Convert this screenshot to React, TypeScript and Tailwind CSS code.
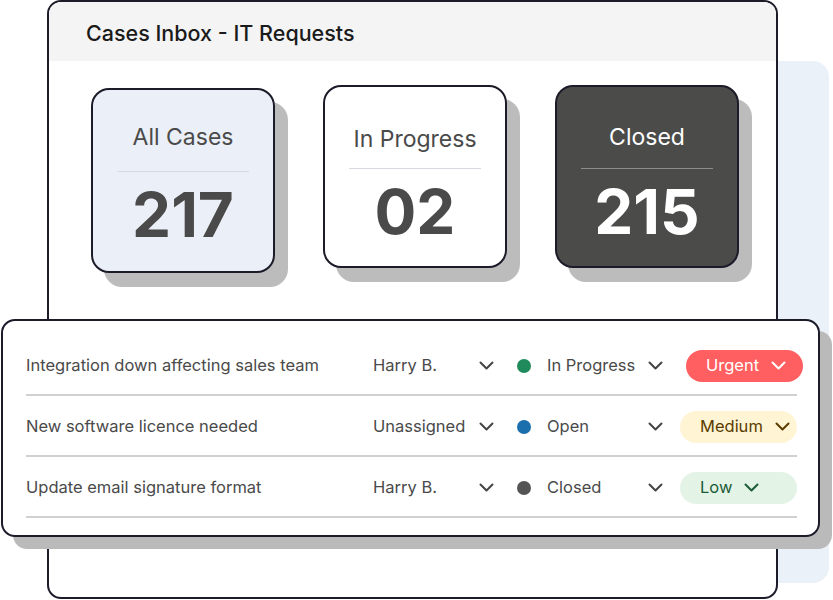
import React from "react";

const Chevron = ({ color = "#444", w = 15 }: { color?: string; w?: number }) => (
  <svg width={w} height={9} viewBox="0 0 15 9" fill="none" className="shrink-0">
    <path d="M1.5 1.5 L7.5 7.5 L13.5 1.5" stroke={color} strokeWidth={2} strokeLinecap="round" strokeLinejoin="round" />
  </svg>
);

type Row = {
  title: string;
  who: string;
  dot: string;
  status: string;
  prio: string;
  pillBg: string;
  pillText: string;
  shift?: boolean;
};

const rows: Row[] = [
  { title: "Integration down affecting sales team", who: "Harry B.", dot: "#1f8a5c", status: "In Progress", prio: "Urgent", pillBg: "bg-[#ff5f61]", pillText: "#ffffff", shift: true },
  { title: "New software licence needed", who: "Unassigned", dot: "#1b6fad", status: "Open", prio: "Medium", pillBg: "bg-[#fff4d4]", pillText: "#5a3c00" },
  { title: "Update email signature format", who: "Harry B.", dot: "#555555", status: "Closed", prio: "Low", pillBg: "bg-[#e3f3e6]", pillText: "#1d5c38" },
];

function Card({ label, value, bg, text, line, h, mt, labelMt, lineMt }: { label: string; value: string; bg: string; text: string; line: string; h: string; mt: string; labelMt: string; lineMt: string }) {
  return (
    <div
      className={`w-[184px] ${h} ${mt} rounded-[18px] border-2 border-[#1c1b2a] shadow-[13px_14px_0_#bdbcbc] flex flex-col items-center ${bg}`}
    >
      <div className={`${labelMt} text-[23px] leading-none ${text}`}>{label}</div>
      <div className={`${lineMt} w-[132px] h-px ${line}`} />
      <div className={`mt-[12px] text-[62px] font-bold leading-none ${text}`}>{value}</div>
    </div>
  );
}

export default function App() {
  return (
    <div className="relative w-[833px] h-[600px] bg-white overflow-hidden font-['Inter',sans-serif]">
      {/* blue backdrop */}
      <div className="absolute left-[740px] top-[61px] w-[89px] h-[522px] rounded-[16px] bg-[#eaf1f9]" />

      {/* main window */}
      <div className="absolute left-[47px] top-0 w-[731px] h-[599px] rounded-[14px] border-2 border-[#1c1b2a] bg-white overflow-hidden">
        <div className="h-[59px] bg-[#f4f4f4] flex items-center pl-[37px] pt-[4px]">
          <span className="text-[21.5px] font-medium text-[#1a1a1a]">Cases Inbox - IT Requests</span>
        </div>
        <div className="flex items-start gap-[48px] pl-[42px] pt-[24px]">
          <Card label="All Cases" value="217" bg="bg-[#ebeff7]" text="text-[#4a4a4a]" line="bg-[#d6d9df]" h="h-[185px]" mt="mt-[3px]" labelMt="mt-[36px]" lineMt="mt-[22px]" />
          <Card label="In Progress" value="02" bg="bg-white" text="text-[#4a4a4a]" line="bg-[#d6d9df]" h="h-[183px]" mt="mt-0" labelMt="mt-[41px]" lineMt="mt-[17px]" />
          <Card label="Closed" value="215" bg="bg-[#4b4b49]" text="text-white" line="bg-[#8d8d8b]" h="h-[183px]" mt="mt-0" labelMt="mt-[39px]" lineMt="mt-[19px]" />
        </div>
      </div>

      {/* table panel */}
      <div className="absolute left-[1px] top-[319px] w-[819px] h-[218px] rounded-[14px] border-2 border-[#1c1b2a] bg-white shadow-[12px_12px_0_#bbbaba] pt-[14px] pl-[23px]">
        {rows.map((r) => (
          <div key={r.title} className="flex items-center h-[61px] w-[771px] pt-[2px] border-b-2 border-[#d0d0d0] text-[16.5px] text-[#4a4a4a]">
            <div className="w-[347px] shrink-0">{r.title}</div>
            <div className="w-[106px] shrink-0">{r.who}</div>
            <Chevron />
            <div className="ml-[23px] w-[14px] h-[14px] rounded-full shrink-0" style={{ backgroundColor: r.dot }} />
            <div className="ml-[16px] w-[101px] shrink-0">{r.status}</div>
            <Chevron />
            <div
              className={`${r.shift ? "ml-[23px]" : "ml-[17px]"} w-[117px] h-[32px] shrink-0 rounded-full flex items-center gap-[12px] pl-[20px] ${r.pillBg}`}
              style={{ color: r.pillText }}
            >
              <span className="text-[16.5px]">{r.prio}</span>
              <Chevron color={r.pillText} w={15} />
            </div>
          </div>
        ))}
      </div>
    </div>
  );
}
